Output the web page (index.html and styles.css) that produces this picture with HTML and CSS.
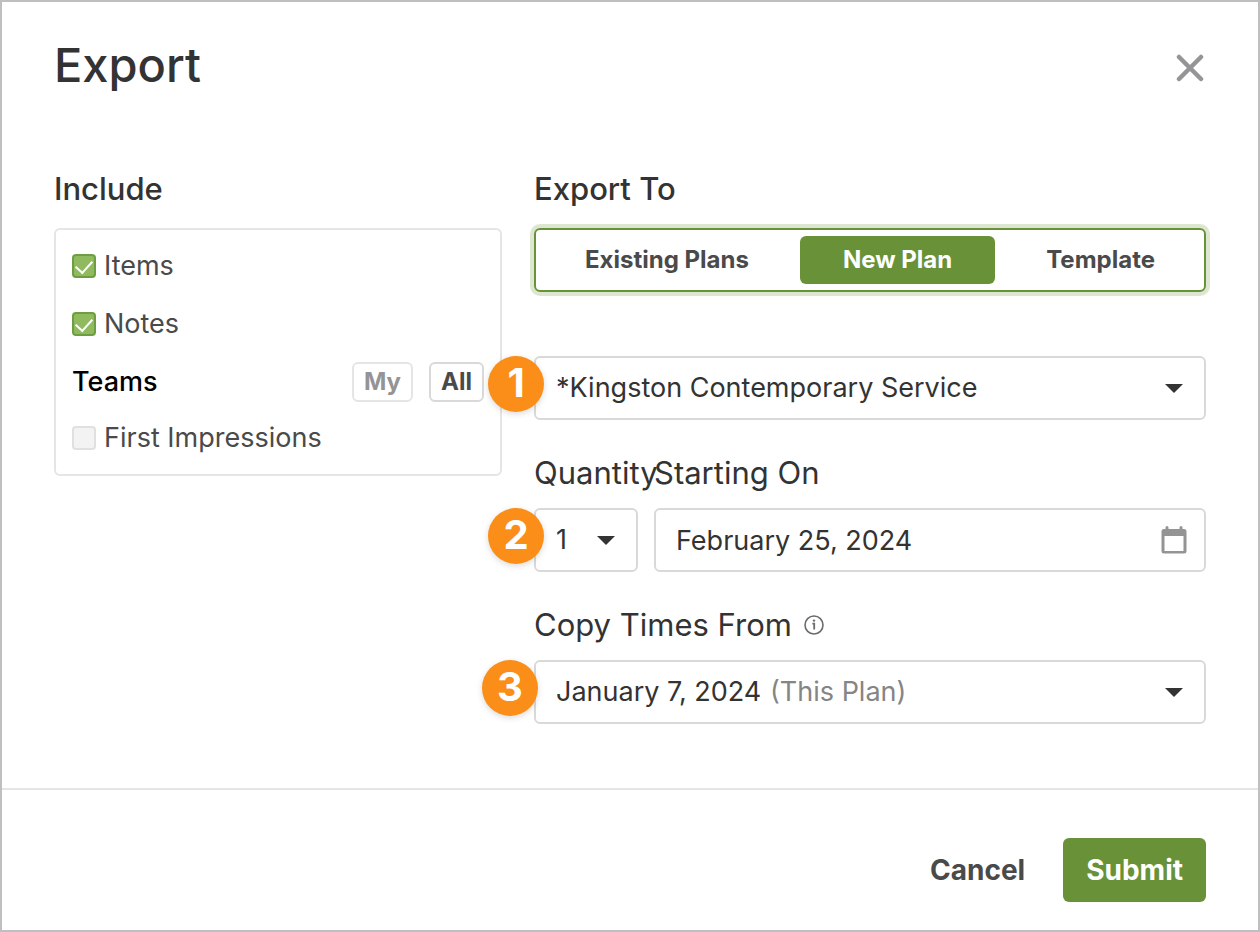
FILE: index.html
```html
<!DOCTYPE html>
<html lang="en">
<head>
    <meta charset="UTF-8">
    <meta name="viewport" content="width=device-width, initial-scale=1.0">
    <title>Export</title>
    <link rel="stylesheet" href="styles.css">
</head>
<body>
    <form class="dialog">
        <header class="dialog-header">
            <h1>Export</h1>
            <button type="button" class="close" aria-label="Close">
                <svg width="28" height="28" viewBox="0 0 28 28" fill="none" stroke="#949597" stroke-width="4.5" stroke-linecap="round">
                    <path d="M3 3l22 22M25 3l-22 22"/>
                </svg>
            </button>
        </header>

        <div class="dialog-body">
            <section>
                <h2>Include</h2>
                <div class="include-box">
                    <label class="check-row"><input type="checkbox" checked> Items</label>
                    <label class="check-row"><input type="checkbox" checked> Notes</label>
                    <div class="teams-row">
                        <h3>Teams</h3>
                        <button type="button" class="mini muted">My</button>
                        <button type="button" class="mini">All</button>
                    </div>
                    <label class="check-row"><input type="checkbox"> First Impressions</label>
                </div>
            </section>

            <section>
                <h2>Export To</h2>
                <div class="segmented">
                    <button type="button">Existing Plans</button>
                    <button type="button" class="active">New Plan</button>
                    <button type="button">Template</button>
                </div>

                <div class="field first-field">
                    <div class="control has-caret">
                        <select aria-label="Service type">
                            <option>*Kingston Contemporary Service</option>
                        </select>
                        <span class="badge">1</span>
                    </div>
                </div>

                <div class="field-row">
                    <div class="field quantity">
                        <label for="quantity">Quantity</label>
                        <div class="control has-caret">
                            <select id="quantity">
                                <option>1</option>
                            </select>
                            <span class="badge">2</span>
                        </div>
                    </div>
                    <div class="field starting">
                        <label for="starting">Starting On</label>
                        <div class="control">
                            <input type="text" id="starting" value="February 25, 2024">
                            <svg class="calendar" width="26" height="28" viewBox="0 0 26 28" fill="#949494">
                                <path fill-rule="evenodd" d="M4.5 1.5a1.5 1.5 0 0 1 3 0V3h11V1.5a1.5 1.5 0 0 1 3 0V3H23a2.5 2.5 0 0 1 2.5 2.5V25a2.5 2.5 0 0 1-2.5 2.5H3A2.5 2.5 0 0 1 .5 25V5.500A2.5 2.5 0 0 1 3 3h1.500zM3.500 10v15h19V10z"/>
                            </svg>
                        </div>
                    </div>
                </div>

                <div class="field">
                    <div class="label-row">
                        <label for="times">Copy Times From</label>
                        <svg width="20" height="20" viewBox="0 0 20 20" fill="none" stroke="#6b6b6b" stroke-width="1.6">
                            <circle cx="10" cy="10" r="9"/>
                            <path d="M8.400 8.600h1.800v6" stroke-width="1.8"/>
                            <circle cx="10" cy="5.600" r="1.2" fill="#6b6b6b" stroke="none"/>
                        </svg>
                    </div>
                    <div class="control has-caret">
                        <select id="times" class="fit">
                            <option>January 7, 2024</option>
                        </select>
                        <span class="hint">(This Plan)</span>
                        <span class="badge badge-outer">3</span>
                    </div>
                </div>
            </section>
        </div>

        <footer class="dialog-footer">
            <button type="button" class="cancel">Cancel</button>
            <button type="submit" class="submit">Submit</button>
        </footer>
    </form>
</body>
</html>
```
FILE: styles.css
```css
* {
    box-sizing: border-box;
}

body {
    margin: 0;
    font-family: Inter, "Liberation Sans", sans-serif;
    font-size: 27px;
    line-height: 40px;
    color: #333;
    background-color: #fff;
}

button, input, select {
    font: inherit;
    color: inherit;
    margin: 0;
    padding: 0;
    border: none;
    background: none;
}

button {
    cursor: pointer;
}

h1, h2, h3 {
    margin: 0;
    font-weight: 500;
}

h1 {
    font-size: 47px;
    line-height: 54px;
}

h2 {
    font-size: 31px;
    line-height: 42px;
    margin-bottom: 18px;
}

.dialog {
    display: flex;
    flex-direction: column;
    min-height: 100vh;
    border: 2px solid #bfbfbf;
}

.dialog-header {
    display: flex;
    justify-content: space-between;
    padding: 36px 52px 0;
}

.close {
    display: flex;
    padding: 16px 2px 10px;
}

.dialog-body {
    display: grid;
    grid-template-columns: 2fr 3fr;
    gap: 32px;
    flex: 1;
    padding: 76px 52px 64px;
}

/* Include list */
.include-box {
    padding: 16px;
    border: 2px solid #e5e5e5;
    border-radius: 6px;
}

.check-row {
    display: flex;
    align-items: center;
    gap: 8px;
    color: #4a4a4a;
}

.check-row + .check-row,
.teams-row {
    margin-top: 18px;
}

.teams-row {
    display: flex;
    gap: 16px;
    margin-bottom: 16px;
}

.teams-row h3 {
    flex: 1;
    font-size: 27px;
    color: #000;
}

.mini {
    height: 40px;
    padding: 0 10px;
    border: 2px solid #d9d9d9;
    border-radius: 6px;
    font-size: 24px;
    font-weight: 700;
    line-height: 36px;
    color: #4a4a4a;
}

.mini.muted {
    border-color: #e5e5e5;
    color: #949494;
}

input[type="checkbox"] {
    appearance: none;
    width: 24px;
    height: 24px;
    border: 2px solid #e0e0e0;
    border-radius: 4px;
    background-color: #f3f3f3;
}

input[type="checkbox"]:checked {
    display: flex;
    justify-content: center;
    border-color: #6f9e42;
    background-color: #8fbb5e;
}

input[type="checkbox"]:checked::before {
    content: "";
    width: 8px;
    height: 14px;
    margin-top: 1px;
    border: solid #fff;
    border-width: 0 2px 2px 0;
    transform: rotate(42deg);
}

/* Export target switch */
.segmented {
    display: flex;
    gap: 8px;
    padding: 6px;
    border: 2px solid #699238;
    border-radius: 6px;
    box-shadow: 0 0 0 4px #dce6d0;
}

.segmented button {
    flex: 1 1 auto;
    height: 48px;
    border-radius: 6px;
    font-size: 24px;
    font-weight: 700;
    color: #4a4a4a;
}

.segmented .active {
    background-color: #699238;
    color: #fff;
}

/* Form fields */
.field {
    margin-top: 32px;
}

.first-field {
    margin-top: 64px;
}

.field label {
    display: block;
    font-size: 31px;
    line-height: 42px;
}

.field > label,
.label-row {
    margin-bottom: 14px;
}

.label-row {
    display: flex;
    align-items: center;
    gap: 12px;
}

.field-row {
    display: flex;
    gap: 16px;
}

.quantity {
    width: 104px;
}

.starting {
    flex: 1;
}

.control {
    position: relative;
    display: flex;
    align-items: center;
    height: 64px;
    border: 2px solid #d9d9d9;
    border-radius: 6px;
}

.control input,
.control select {
    appearance: none;
    width: 100%;
    height: 60px;
    padding-left: 20px;
    outline: none;
}

.control .fit {
    width: auto;
}

.hint {
    padding-left: 8px;
    color: #858585;
}

.has-caret::after {
    content: "";
    position: absolute;
    top: 26px;
    right: 21px;
    border: 9px solid transparent;
    border-top-color: #333;
    border-bottom: none;
}

.calendar {
    flex: none;
    margin-right: 17px;
}

/* Numbered callouts over the fields */
.badge {
    position: absolute;
    top: -2px;
    left: -48px;
    z-index: 1;
    width: 56px;
    height: 56px;
    border-radius: 50%;
    background-color: #fa8e19;
    box-shadow: 0 2px 6px rgba(0, 0, 0, 0.15);
    color: #fff;
    font-size: 40px;
    font-weight: 700;
    line-height: 54px;
    text-align: center;
}

.badge-outer {
    left: -54px;
}

.dialog-footer {
    display: flex;
    justify-content: flex-end;
    gap: 38px;
    padding: 48px 52px 28px;
    border-top: 2px solid #e5e5e5;
}

.dialog-footer button {
    height: 64px;
    font-size: 28px;
    font-weight: 700;
}

.cancel {
    color: #4a4a4a;
}

.dialog-footer .submit {
    padding: 0 23px;
    border-radius: 6px;
    background-color: #699238;
    color: #fff;
}
```
